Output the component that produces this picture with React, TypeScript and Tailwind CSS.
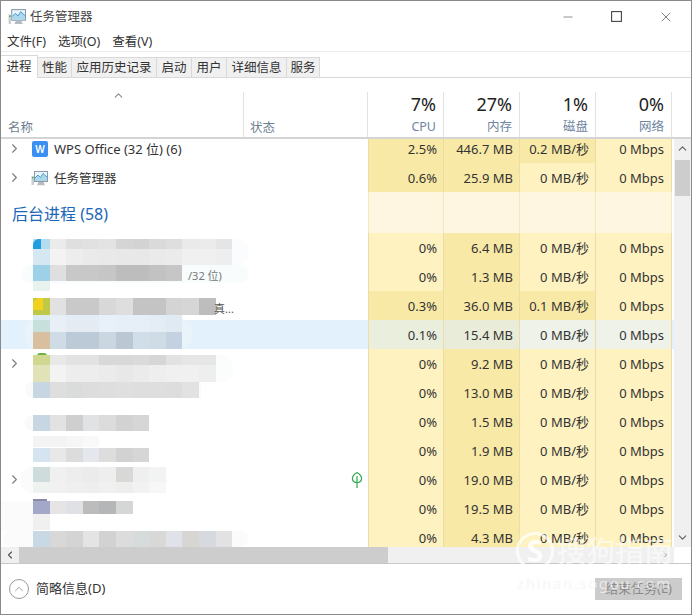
import React from "react";
import { ChevronRight, ChevronUp, ChevronDown, ChevronLeft, Minus, X } from "lucide-react";

const CJK = "font-['Noto_Sans','Noto_Sans_CJK_SC',sans-serif]";
const DARK = "bg-[#f9e9a6]";
const LIGHT = "bg-[#fef2c1]";

type Row = {
  expand?: boolean;
  selected?: boolean;
  leaf?: boolean;
  cpu: string;
  mem: string;
  disk: string;
  cpuHot?: boolean;
  diskHot?: boolean;
};

const rowsAfter: Row[] = [
  { cpu: "0%", mem: "6.4 MB", disk: "0 MB/秒" },
  { cpu: "0%", mem: "1.3 MB", disk: "0 MB/秒" },
  { cpu: "0.3%", mem: "36.0 MB", disk: "0.1 MB/秒", cpuHot: true, diskHot: true },
  { cpu: "0.1%", mem: "15.4 MB", disk: "0 MB/秒", selected: true },
  { cpu: "0%", mem: "9.2 MB", disk: "0 MB/秒", expand: true },
  { cpu: "0%", mem: "13.0 MB", disk: "0 MB/秒" },
  { cpu: "0%", mem: "1.5 MB", disk: "0 MB/秒" },
  { cpu: "0%", mem: "1.9 MB", disk: "0 MB/秒" },
  { cpu: "0%", mem: "19.0 MB", disk: "0 MB/秒", expand: true, leaf: true },
  { cpu: "0%", mem: "19.5 MB", disk: "0 MB/秒" },
  { cpu: "0%", mem: "4.3 MB", disk: "0 MB/秒" },
];

// Pixelated privacy mosaic that lies over the process names: [top within list, height, colours]
const strips: [number, number, string[]][] = [
  [100, 10, ["#b5dcee", "#ebebeb", "#dfdfdf", "#e1e1e1", "#e3e3e3", "#d5d5d5", "#d3d3d3", "#dadada", "#dedede", "#eaeaea", "#ebebeb", "#e5e5e5"]],
  [110, 16, ["#d5e8f1", "#f3f3f3", "#ededed", "#eaeaea", "#e9e9e9", "#e8e8e8", "#e8e8e8", "#eaeaea", "#ebebeb", "#f0f0f0", "#f0f0f0", "#eeeeee"]],
  [126, 16, ["#9dd1e8", "#dfdfdf", "#c8c8c8", "#c8c8c8", "#c6c6c6", "#bdbdbd", "#bdbdbd", "#c2c2c2", "#c6c6c6"]],
  [142, 10, ["#e8f2ef"]],
  [159, 17, ["#c0c848", "#e1e1e1", "#c9c9c9", "#c9c9c9", "#d8d8d8", "#dedede", "#c4c4c4", "#c4c4c4", "#d4d4d4", "#d6d6d6", "#bdbdbd"]],
  [176, 5, ["#dcebf0", "#e8eef5", "#e4ecf5", "#e4ecf5", "#e8f1fa", "#e6eef7", "#e6eef7", "#e4ecf5", "#e0eaf3"]],
  [181, 12, ["#c8e0dc", "#e8eff6", "#e4ebf3", "#e4ebf3", "#e8f1fa", "#e6eef7", "#e6eef7", "#e4ecf5", "#e0eaf3"]],
  [193, 17, ["#d8bfa0", "#cfdce6", "#bccad8", "#bccad8", "#cad7e1", "#bbc8d4", "#d0deea", "#cfdce6", "#c4d1e0"]],
  [216, 10, ["#cfd790", "#e8e8e8", "#e2e2e2", "#e2e2e2", "#d8d8d8", "#d8d8d8", "#dadada", "#d6d6d6", "#e2e2e2", "#e6e6e6", "#e6e6e6"]],
  [226, 17, ["#e2e2b8", "#f3f3f3", "#ededed", "#ededed", "#ebebeb", "#e8e8e8", "#ebebeb", "#eeeeee", "#f0f0f0", "#f0f0f0", "#eeeeee"]],
  [243, 16, ["#c8d6e4", "#dedede", "#dadcdc", "#dddddd", "#dedede", "#dfdfdf", "#dedede", "#dedede", "#dddddd", "#e2e2e2"]],
  [276, 16, ["#c8d6e4", "#e2e2e2", "#cfcfcf", "#e0e2e4", "#dcdcdc", "#d2d2d2", "#d6d6d6"]],
  [297, 11, ["#f3f3f3", "#f3f3f3", "#f6f6f6", "#f9f9f9"]],
  [309, 14, ["#d5e4f0", "#e8e8e8", "#dcdcdc", "#e4e8ec", "#dddddd", "#d2d2d2", "#d6d6d6"]],
  [328, 15, ["#cfdcdc", "#f0f0f0", "#ededed", "#ebebeb", "#eeeeee", "#d8d8d6", "#efefef", "#f2f4f4"]],
  [343, 11, ["#eef3f2", "#f1f1f1", "#efefef", "#eeeeee", "#f0f0f0", "#eeeeec", "#f2f2f2", "#f7f7f7"]],
  [362, 13, ["#a4a8c8", "#e6e4e4", "#dfe1e4", "#bcbcbc", "#b5b6b8", "#d4d7d6"]],
  [375, 16, ["#f0f0f0"]],
  [392, 16, ["#c8d8e4", "#d8d8d8", "#d4d4d4", "#e4e4e4", "#d2d2d2", "#dcdcdc", "#d6dbdb", "#d8d8d6", "#dfe2e6", "#d8d6d4", "#d6dade", "#e2e2e2"]],
];

function TaskIcon({ className }: { className: string }) {
  return (
    <svg viewBox="0 0 17 16" className={className}>
      <rect x="3.5" y="1.5" width="13" height="10" fill="#e9f4fb" stroke="#8b9aa6" />
      <path d="M4 8 L7 5 L9.5 7.5 L12 3.5 L16 7 V11 H4 Z" fill="#a9d8ef" />
      <path d="M4 8 L7 5 L9.5 7.5 L12 3.5 L16 7" fill="none" stroke="#3f97c9" strokeWidth="0.9" />
      <rect x="0.5" y="6" width="2.5" height="9" fill="#c9cfd2" />
      <rect x="1" y="7" width="1.5" height="1.5" fill="#52b05a" />
      <path d="M6 15.2 H14 L12.5 12 H7.5 Z" fill="#b4bcc2" />
    </svg>
  );
}

function Heat({ hot, selected, tone, children, extra = "" }: { hot?: boolean; selected?: boolean; tone?: string; children?: React.ReactNode; extra?: string }) {
  const bg = selected ? tone : hot ? DARK : LIGHT;
  return (
    <div className={`w-[76px] ${bg} ${extra} shrink-0 flex items-center justify-end pt-[3px] pr-[6px] border-r border-[#ecdcaa] text-[13px]`}>{children}</div>
  );
}

function Values({ row }: { row: Row }) {
  return (
    <>
      <Heat hot={row.cpuHot} selected={row.selected} tone="bg-[#eaeedd]" extra="border-l">{row.cpu}</Heat>
      <Heat hot selected={row.selected} tone="bg-[#e8ecd9]">{row.mem}</Heat>
      <Heat hot={row.diskHot} selected={row.selected} tone="bg-[#eef2e8]">{row.disk}</Heat>
      <Heat selected={row.selected} tone="bg-[#eef2e8]" extra="pr-[7px]">0 Mbps</Heat>
    </>
  );
}

function Chevron() {
  return <ChevronRight size={15} strokeWidth={1.8} className="text-[#7d7d7d] ml-[6px]" />;
}

function HeadCol({ pct, label }: { pct: string; label: string }) {
  return (
    <div className="w-[76px] shrink-0 h-[45px] border-r border-[#e2e2e2] flex flex-col items-end pr-[7px]">
      <div className="text-[18px] leading-[22px] text-[#222] mt-[1px]">{pct}</div>
      <div className="text-[12.5px] leading-[18px] text-[#6d84a0] mt-[3px]">{label}</div>
    </div>
  );
}

export default function App() {
  const tabs: [string, string][] = [
    ["性能", "w-[34px]"],
    ["应用历史记录", "w-[85px]"],
    ["启动", "w-[35px]"],
    ["用户", "w-[35px]"],
    ["详细信息", "w-[60px]"],
    ["服务", "w-[33px]"],
  ];
  return (
    <div className={`relative w-[692px] h-[615px] overflow-hidden bg-white border border-[#8a8a8a] flex flex-col text-[12.5px] text-[#333] ${CJK}`}>
      {/* Title bar */}
      <div className="h-[31px] shrink-0 flex items-center pl-[7px]">
        <TaskIcon className="w-[18px] h-[17px]" />
        <span className="ml-[4px] mt-[2px] text-[#444]">任务管理器</span>
        <div className="ml-auto flex items-center text-[#444]">
          <Minus size={14} strokeWidth={1} className="mr-[36px]" />
          <svg viewBox="0 0 11 11" className="w-[11px] h-[11px] mr-[36px]">
            <rect x="0.6" y="0.6" width="9.8" height="9.8" fill="none" stroke="#444" strokeWidth="1.1" />
          </svg>
          <X size={16} strokeWidth={1} className="mr-[17px]" />
        </div>
      </div>
      {/* Menu */}
      <div className="h-[20px] shrink-0 flex items-center gap-[12px] pl-[6px] pt-[2px] border-b border-[#ececec] text-[#333]">
        <span>文件(F)</span>
        <span>选项(O)</span>
        <span>查看(V)</span>
      </div>
      {/* Tabs */}
      <div className="relative h-[26px] shrink-0 flex items-end border-b border-[#d9d9d9]">
        <div className="w-[37px] h-[23px] mb-[-1px] bg-white border-r border-t border-[#d9d9d9] flex items-center justify-center z-10">进程</div>
        {tabs.map(([t, w]) => (
          <div key={t} className={`${w} h-[20px] pt-[2px] bg-[#f0f0f0] border-r border-t border-[#d9d9d9] flex items-center justify-center`}>{t}</div>
        ))}
      </div>
      {/* Header */}
      <div className="h-[61px] shrink-0 flex items-end border-b-2 border-[#d4d4d4]">
        <div className="relative w-[243px] shrink-0 h-[45px] border-r border-[#e2e2e2]">
          <ChevronUp size={13} strokeWidth={2} className="absolute left-[111px] top-[-3px] text-[#8a8a8a]" />
          <span className="absolute left-[7px] top-[27px] text-[#6f7f8f]">名称</span>
        </div>
        <div className="relative w-[124px] shrink-0 h-[45px] border-r border-[#e2e2e2]">
          <span className="absolute left-[6px] top-[27px] text-[#6f7f8f]">状态</span>
        </div>
        <HeadCol pct="7%" label="CPU" />
        <HeadCol pct="27%" label="内存" />
        <HeadCol pct="1%" label="磁盘" />
        <HeadCol pct="0%" label="网络" />
      </div>
      {/* Body */}
      <div className="flex h-[408px] shrink-0">
        <div className="relative w-[673px] overflow-hidden">
          <div className="mt-[-5px] flex flex-col">
            <div className="h-[29px] flex">
              <div className="w-[367px] shrink-0 flex items-center">
                <Chevron />
                <div className="ml-[10px] w-[16px] h-[16px] rounded-[2px] bg-[#3a8ff2] flex items-center justify-center text-white text-[10px] leading-none font-semibold">W</div>
                <span className="ml-[6px] mt-[3px] text-[13px]">WPS Office (32 位) (6)</span>
              </div>
              <Values row={{ cpu: "2.5%", mem: "446.7 MB", disk: "0.2 MB/秒", cpuHot: true, diskHot: true }} />
            </div>
            <div className="h-[29px] flex">
              <div className="w-[367px] shrink-0 flex items-center">
                <Chevron />
                <TaskIcon className="ml-[9px] w-[17px] h-[16px]" />
                <span className="ml-[6px] mt-[3px]">任务管理器</span>
              </div>
              <Values row={{ cpu: "0.6%", mem: "25.9 MB", disk: "0 MB/秒", cpuHot: true }} />
            </div>
            <div className="h-[41px] flex">
              <div className="w-[367px] shrink-0 flex items-center pl-[11px] pt-[3px] text-[16px] text-[#1a66b8]">后台进程 (58)</div>
              {[0, 1, 2, 3].map((i) => (
                <div key={i} className={`w-[76px] shrink-0 bg-[#fef6e0] border-r border-[#f3e6c0] ${i === 0 ? "border-l" : ""}`} />
              ))}
            </div>
            {rowsAfter.map((r, i) => (
              <div key={i} className={`h-[29px] shrink-0 flex ${r.selected ? "bg-[#e3f1fc]" : ""}`}>
                <div className="w-[367px] shrink-0 flex items-center justify-between pr-[5px]">
                  {r.expand ? <Chevron /> : <span />}
                  {r.leaf && (
                    <svg viewBox="0 0 12 18" className="w-[12px] h-[18px]">
                      <path d="M6 1.5 C9.5 3.5 11 6 10.5 8.5 C10 10.5 8 11.5 6 11.5 C4 11.5 2 10.5 1.5 8.5 C1 6 2.5 3.5 6 1.5 Z" fill="none" stroke="#2fa84f" strokeWidth="1.2" />
                      <path d="M6 5 V17" stroke="#2fa84f" strokeWidth="1.2" />
                    </svg>
                  )}
                </div>
                <Values row={r} />
              </div>
            ))}
          </div>
          {/* Mosaic over names */}
          <div className="absolute inset-0 pointer-events-none">
            <div className="absolute left-[32px] top-[100px] w-[215px] h-[26px] rounded-[10px] bg-[#fbfcfd]" />
            <div className="absolute left-[21px] top-[126px] w-[226px] h-[18px] rounded-[8px] bg-[#f8fcfd]" />
            <div className="absolute left-[24px] top-[180px] w-[167px] h-[30px] rounded-[12px] bg-[#e9f3fa]" />
            <div className="absolute left-[32px] top-[216px] w-[200px] h-[27px] rounded-[12px] bg-[#fbfcfc]" />
            <div className="absolute left-[24px] top-[243px] w-[176px] h-[16px] rounded-l-[8px] bg-[#fafafa]" />
            <div className="absolute left-[24px] top-[276px] w-[125px] h-[16px] rounded-[8px] bg-[#fafafa]" />
            <div className="absolute left-[19px] top-[328px] w-[147px] h-[26px] rounded-[12px] bg-[#fbfbfb]" />
            <div className="absolute left-0 top-[362px] w-[33px] h-[30px] bg-[#fbfbfb]" />
            <div className="absolute left-[2px] top-[392px] w-[245px] h-[16px] rounded-[8px] bg-[#fbfbfb]" />
            <div className="absolute left-[32px] top-[100px] w-[8px] h-[10px] rounded-tl-[6px] bg-[#1f9fe0] z-10" />
            <div className="absolute left-[32px] top-[159px] w-[10px] h-[12px] rounded-tl-[7px] bg-[#f2d21c] z-10" />
            <div className="absolute left-[36px] top-[214px] w-[10px] h-[3px] rounded-t-[3px] bg-[#6db33f]" />
            <div className="absolute left-[32px] top-[360px] w-[14px] h-[2px] bg-[#8a8aa8]" />
            {strips.map(([top, h, cells]) => (
              <div key={top} className="absolute left-[32px] flex" style={{ top, height: h }}>
                {cells.map((c, i) => (
                  <div key={i} className="w-[16.6px] shrink-0" style={{ background: c }} />
                ))}
              </div>
            ))}
            <span className="absolute left-[187px] top-[132px] text-[11px] leading-[10px] text-[#777]">/32 位)</span>
            <span className="absolute left-[213px] top-[165px] text-[11px] leading-[10px] text-[#555]">真...</span>
          </div>
        </div>
        {/* Vertical scrollbar */}
        <div className="w-[17px] shrink-0 bg-[#f0f0f0] flex flex-col items-center relative">
          <ChevronUp size={13} strokeWidth={2} className="mt-[3px] text-[#606060]" />
          <div className="mt-[5px] w-[15px] h-[36px] bg-[#cdcdcd]" />
          <ChevronDown size={13} strokeWidth={2} className="mt-auto mb-[3px] text-[#606060]" />
        </div>
      </div>
      {/* Horizontal scrollbar */}
      <div className="h-[16px] shrink-0 flex items-center border-b border-[#c8c8c8] box-content">
        <div className="w-[18px] h-full shrink-0 bg-[#f0f0f0] flex items-center justify-center">
          <ChevronLeft size={12} strokeWidth={2.2} className="text-[#505050]" />
        </div>
        <div className="w-[369px] h-full shrink-0 bg-[#cdcdcd]" />
        <div className="w-[286px] h-full shrink-0 bg-[#f0f0f0] flex items-center justify-end pr-[3px]">
          <ChevronRight size={12} strokeWidth={2} className="text-[#a0a0a0]" />
        </div>
      </div>
      {/* Footer */}
      <div className="flex-1 flex items-center pl-[8px] pr-[9px]">
        <div className="w-[20px] h-[20px] rounded-full border border-[#9a9a9a] flex items-center justify-center">
          <ChevronUp size={14} strokeWidth={1.2} className="text-[#808080]" />
        </div>
        <span className="ml-[7px] text-[13px]">简略信息(D)</span>
        <div className="ml-auto w-[87px] h-[22px] bg-[#cccccc] flex items-center justify-center text-[#8a8a8a] text-[13px]">结束任务(E)</div>
      </div>
      {/* Watermark */}
      <div className="absolute left-[515px] top-[531px] w-[38px] h-[38px] rounded-full border-[3px] border-white/75 flex items-center justify-center text-white/85 text-[30px] font-bold leading-none">S</div>
      <div className="absolute left-[556px] top-[532px] text-[29px] leading-[36px] text-white/60 whitespace-nowrap">搜狗指南</div>
      <div className="absolute left-[516px] top-[573px] text-[15px] leading-[18px] tracking-[1.6px] text-white/70 [text-shadow:0_0_1px_rgba(0,0,0,0.08)] whitespace-nowrap">zhinan.sogou.com</div>
    </div>
  );
}
